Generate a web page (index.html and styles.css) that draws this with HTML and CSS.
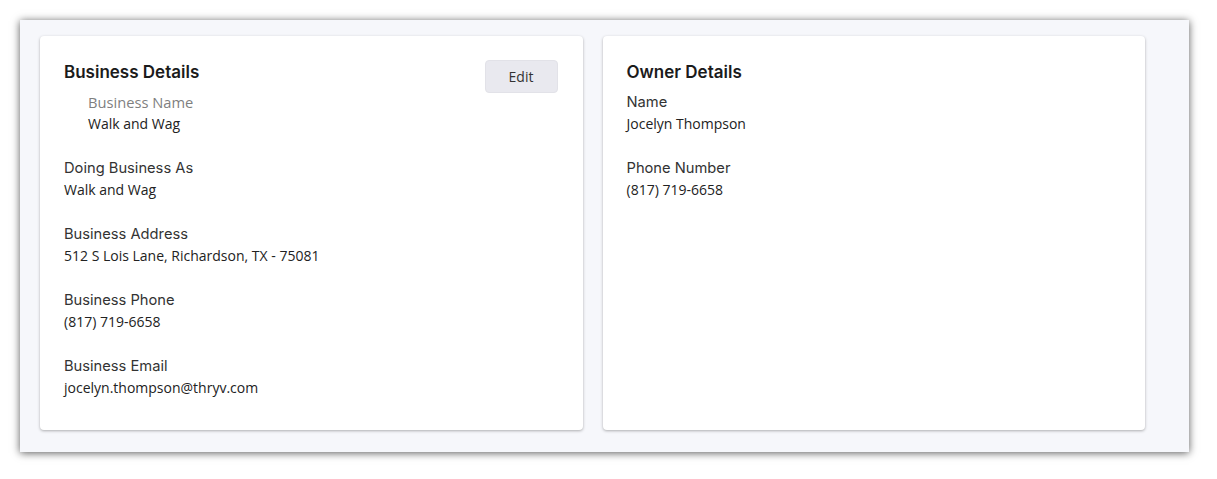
FILE: index.html
```html
<!DOCTYPE html>
<html lang="en">
<head>
    <meta charset="UTF-8">
    <meta name="viewport" content="width=device-width, initial-scale=1.0">
    <title>Business Profile</title>
    <link rel="stylesheet" href="styles.css">
</head>
<body>

<div class="frame">
    <div class="card">
        <div class="card-header">
            <h3>Business Details</h3>
            <button class="edit-btn">Edit</button>
        </div>
        <div class="field field-indent">
            <div class="label label-muted">Business Name</div>
            <div class="value">Walk and Wag</div>
        </div>
        <div class="field">
            <div class="label">Doing Business As</div>
            <div class="value">Walk and Wag</div>
        </div>
        <div class="field">
            <div class="label">Business Address</div>
            <div class="value">512 S Lois Lane, Richardson, TX - 75081</div>
        </div>
        <div class="field">
            <div class="label">Business Phone</div>
            <div class="value">(817) 719-6658</div>
        </div>
        <div class="field">
            <div class="label">Business Email</div>
            <div class="value">jocelyn.thompson@thryv.com</div>
        </div>
    </div>

    <div class="card">
        <div class="card-header">
            <h3>Owner Details</h3>
        </div>
        <div class="field">
            <div class="label">Name</div>
            <div class="value">Jocelyn Thompson</div>
        </div>
        <div class="field">
            <div class="label">Phone Number</div>
            <div class="value">(817) 719-6658</div>
        </div>
    </div>
</div>

</body>
</html>
```

FILE: styles.css
```css
body {
    margin: 0;
    padding: 20px;
    background-color: #fff;
    font-family: "Open Sans", sans-serif;
}

.frame {
    width: 1105px;
    height: 394px;
    padding: 16px 44px 22px 20px;
    background-color: #f6f7fb;
    box-shadow: 0 1px 8px rgba(0, 0, 0, 0.65);
    display: flex;
    gap: 20px;
}

.card {
    flex: 1;
    background-color: #fff;
    border-radius: 4px;
    box-shadow: 0 1px 3px rgba(0, 0, 0, 0.3);
    padding: 24px 24px 32px 24px;
}

.card-header {
    display: flex;
    justify-content: space-between;
    align-items: flex-start;
    height: 24px;
    margin-bottom: 8px;
}

h3 {
    margin: 0;
    font-family: Inter, sans-serif;
    font-size: 17px;
    font-weight: 600;
    line-height: 24px;
    color: #1b1b1b;
}

.edit-btn {
    width: 73px;
    height: 33px;
    margin-right: 1px;
    background-color: #e9e9ef;
    border: 1px solid #e2e2e8;
    border-radius: 4px;
    font-family: "Open Sans", sans-serif;
    font-size: 14px;
    color: #333;
    cursor: pointer;
}

.field {
    margin-bottom: 24px;
}

.field-indent {
    padding-left: 24px;
}

.label {
    font-family: Inter, sans-serif;
    font-size: 14.7px;
    line-height: 21px;
    color: #333;
}

.label-muted {
    font-family: "Open Sans", sans-serif;
    color: #7f7f7f;
}

.value {
    font-size: 14px;
    line-height: 21px;
    color: #222;
}
```
